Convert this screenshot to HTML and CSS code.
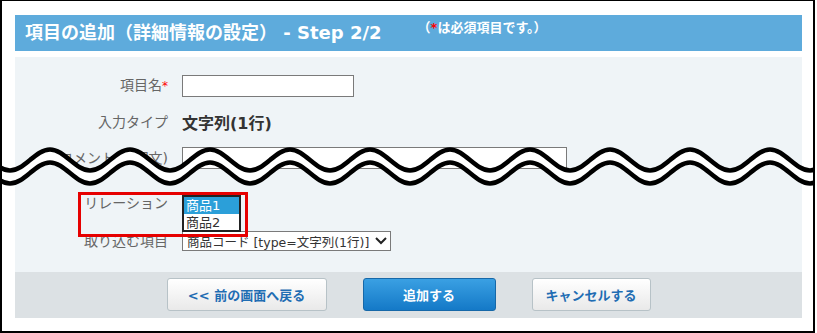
FILE: index.html
```html
<!DOCTYPE html>
<html lang="ja">
<head>
    <meta charset="UTF-8">
    <title>項目の追加</title>
    <link rel="stylesheet" href="styles.css">
</head>
<body>
    <div class="frame">
        <div class="title-bar">
            <h1>項目の追加（詳細情報の設定） - Step 2/2</h1>
            <span class="note">（<span class="req">*</span>は必須項目です。）</span>
        </div>

        <div class="form-panel">
            <div class="form-row">
                <div class="label">項目名<span class="req">*</span></div>
                <div class="text-input short"></div>
            </div>
            <div class="form-row">
                <div class="label">入力タイプ</div>
                <div class="value">文字列(1行)</div>
            </div>
            <div class="form-row">
                <div class="label">コメント(説明文)</div>
                <div class="text-input long"></div>
            </div>
            <div class="form-row relation-row">
                <div class="label">リレーション</div>
                <div class="listbox">
                    <div class="option selected">商品1</div>
                    <div class="option">商品2</div>
                </div>
                <div class="mark"></div>
            </div>
            <div class="form-row select-row">
                <div class="label">取り込む項目</div>
                <div class="select-box">
                    <span>商品コード [type=文字列(1行)]</span>
                    <svg width="12" height="8" viewBox="0 0 12 8"><polyline points="1,1 6,6 11,1" fill="none" stroke="#222" stroke-width="2"/></svg>
                </div>
            </div>
        </div>

        <div class="form-footer">
            <button class="btn back">&lt;&lt; 前の画面へ戻る</button>
            <button class="btn primary">追加する</button>
            <button class="btn cancel">キャンセルする</button>
        </div>

        <!-- cut marker: omitted part of the form -->
        <svg class="cut" width="817" height="50">
            <defs>
                <path id="wave" fill="none" d="M -40 20 C -33.48 25.38, -27.24 30.5, -20 30.5 S -6.52 25.38, 0 20 S 12.76 9.5, 20 9.5 S 33.48 14.62, 40 20 S 52.76 30.5, 60 30.5 S 73.48 25.38, 80 20 S 92.76 9.5, 100 9.5 S 113.48 14.62, 120 20"/>
                <pattern id="cutPattern" x="30" y="0" width="80" height="50" patternUnits="userSpaceOnUse">
                    <use href="#wave" stroke="#fff" stroke-width="12" transform="translate(0 6.5)"/>
                    <use href="#wave" stroke="#000" stroke-width="4.5"/>
                    <use href="#wave" stroke="#000" stroke-width="4.5" transform="translate(0 13)"/>
                </pattern>
            </defs>
            <rect width="817" height="50" fill="url(#cutPattern)"/>
        </svg>
    </div>
</body>
</html>
```

FILE: styles.css
```css
* {
    box-sizing: border-box;
}

body {
    margin: 0;
    font-family: "DejaVu Sans", "Noto Sans CJK JP", sans-serif;
    background-color: #fff;
    color: #333;
}

.frame {
    position: relative;
    width: 815px;
    height: 333px;
    border-style: solid;
    border-color: #000;
    border-width: 1px 2px 2px 2px;
    padding: 14px 11px 0 13px;
    overflow: hidden;
}

.title-bar {
    display: flex;
    align-items: flex-start;
    height: 36px;
    padding-left: 10px;
    background-color: #5eabdc;
    color: #fff;
}

.title-bar h1 {
    margin: 0;
    font-size: 18px;
    line-height: 36px;
    font-weight: 700;
}

.note {
    margin-left: 36px;
    margin-top: 5px;
    font-size: 13px;
    line-height: 16px;
    font-weight: 700;
}

.req {
    color: #f00;
}

.form-panel {
    margin-top: 6px;
    padding: 18px 0 21px;
    background-color: #eff4f7;
}

.form-row {
    display: flex;
    align-items: center;
    height: 22px;
    margin-bottom: 14px;
}

.label {
    width: 153px;
    margin-right: 14px;
    text-align: right;
    font-size: 14px;
    line-height: 17px;
    color: #666;
}

.label .req {
    font-size: 12px;
}

.value {
    font-size: 16px;
    font-weight: 700;
    color: #333;
}

.text-input {
    height: 22px;
    background-color: #fff;
    border: 1px solid #7a7a7a;
}

.text-input.short {
    width: 172px;
}

.text-input.long {
    width: 385px;
}

.relation-row {
    position: relative;
    align-items: flex-start;
    height: 36px;
    margin-top: 26px;
    margin-bottom: 0;
}

.listbox {
    position: relative;
    z-index: 1;
    width: 59px;
    height: 37px;
    background-color: #fff;
    border: 2px solid #222;
    font-size: 13px;
    line-height: 17px;
    color: #333;
}

.option {
    padding-left: 2px;
    height: 17px;
}

.option.selected {
    background-color: #2b9fd9;
    color: #fff;
}

.mark {
    position: absolute;
    z-index: 2;
    left: 63px;
    top: -3px;
    width: 170px;
    height: 45px;
    border: 3px solid #e60000;
}

.select-row {
    height: 20px;
    margin-bottom: 0;
}

.select-box {
    display: flex;
    align-items: center;
    justify-content: space-between;
    width: 209px;
    height: 20px;
    padding: 0 3px 0 4px;
    background-color: #fff;
    border: 1px solid #7a7a7a;
    font-size: 12.5px;
    white-space: nowrap;
    color: #333;
}

.form-footer {
    display: flex;
    justify-content: center;
    gap: 36px;
    height: 46px;
    padding-top: 6px;
    background-color: #dce1e4;
}

.btn {
    height: 33px;
    font-family: inherit;
    font-size: 13px;
    font-weight: 700;
    color: #1f6db3;
    background: linear-gradient(#ffffff, #e9e9e9);
    border: 1px solid #b7c2c7;
    border-radius: 3px;
    cursor: pointer;
}

.btn.back {
    width: 160px;
}

.btn.primary {
    width: 133px;
    color: #fff;
    background: linear-gradient(#3aa0e3, #1479c7);
    border-color: #1668a8;
}

.btn.cancel {
    width: 119px;
}

.cut {
    position: absolute;
    left: -2px;
    top: 139px;
}
```
